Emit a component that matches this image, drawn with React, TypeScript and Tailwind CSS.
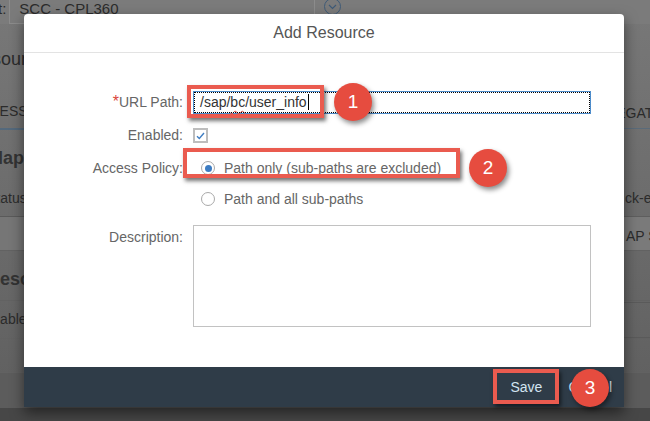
import React from 'react';

const font = { fontFamily: '"Liberation Sans", Arial, sans-serif' };

const Callout = ({ n, className }: { n: string; className: string }) => (
    <div
        className={`absolute w-[38px] h-[38px] rounded-full bg-[#e64c3f] text-white text-[19px] flex items-center justify-center shadow-[2px_3px_5px_rgba(0,0,0,0.45)] ${className}`}
    >
        {n}
    </div>
);

const Frame = ({ className }: { className: string }) => (
    <div className={`absolute border-4 border-[#ea5b4f] shadow-[2px_3px_4px_rgba(0,0,0,0.55)] ${className}`} />
);

export default function App() {
    return (
        <div className="relative w-[650px] h-[421px] overflow-hidden bg-[#6c6c6c] text-[#2b2b2b]" style={font}>
            {/* Page behind the dialog */}
            <div className="flex flex-col w-full h-full bg-gradient-to-b from-[#787878] via-[#6c6c6c] to-[#5e5e5e]">
                <div className="h-[24px] flex items-start gap-[3px] bg-[#7b7b7b]">
                    <span className="text-[15px] leading-[18px] -ml-[2px]">t:</span>
                    <div className="w-[306px] h-[30px] -mt-[6px] border border-[#8c8c8c] pl-[9px] pt-[5px] text-[15px] leading-[18px]">
                        SCC - CPL360
                    </div>
                    <div className="ml-[6px] -mt-[2px] w-[17px] h-[17px] rounded-full border border-[#3f5b78] flex items-center justify-center">
                        <svg width="9" height="6" viewBox="0 0 9 6">
                            <path d="M1 1l3.5 3.5L8 1" fill="none" stroke="#3f5b78" strokeWidth="1.2" />
                        </svg>
                    </div>
                </div>
                <div className="h-[70px] flex items-center">
                    <span className="text-[18px] -ml-[31px]">Resources</span>
                </div>
                <div className="h-[36px] flex items-center border-b-2 border-[#54697c] w-[60px]">
                    <span className="text-[14px] -ml-[30px]">ACCESS</span>
                </div>
                <div className="h-[50px] flex items-end pb-[8px]">
                    <span className="text-[18px] font-bold text-[#333] -ml-[12px]">Mapping</span>
                </div>
                <div className="h-[37px] flex items-center border-b border-[#5a5a5a] w-[34px]">
                    <span className="text-[14px] -ml-[13px]">Status</span>
                </div>
                <div className="h-[33px] bg-[#767676]" />
                <div className="h-[50px] flex items-end pb-[7px] border-t border-[#626262]">
                    <span className="text-[18px] font-bold text-[#333] -ml-[13px]">Resources</span>
                </div>
                <div className="h-[38px] flex items-center border-t border-[#626262]">
                    <span className="text-[14px] -ml-[17px]">Enabled</span>
                </div>
                <div className="h-[34px] border-t border-[#626262]" />
                <div className="h-[36px] border-t border-[#626262] bg-[#5c5c5c]" />
                <div className="flex-1 bg-[#474747]" />
            </div>

            {/* Right strip texts */}
            <div className="absolute top-[103px] left-[589px] text-[14px] whitespace-nowrap">DELEGATE</div>
            <div className="absolute top-[128px] left-[624px] w-[26px] h-[1px] bg-[#5a6b7a]" />
            <div className="absolute top-[188px] left-[625px] text-[14px] whitespace-nowrap">ck-e</div>
            <div className="absolute top-[216px] left-[624px] w-[26px] h-[34px] bg-[#7a7a7a] border-t border-[#5e5e5e] pt-[9px] pl-[2px] text-[14px] whitespace-nowrap overflow-hidden">
                AP S
            </div>
            <div className="absolute top-[302px] left-[624px] w-[26px] h-[1px] bg-[#5a5a5a]" />
            <div className="absolute top-[337px] left-[624px] w-[26px] h-[1px] bg-[#5a5a5a]" />

            {/* Dialog */}
            <div className="absolute left-[24px] top-[14px] w-[600px] h-[393px] bg-white rounded-t-[4px] flex flex-col shadow-[0_6px_14px_rgba(0,0,0,0.5)]">
                <div className="h-[39px] flex items-center justify-center border-b border-[#e3e3e3] text-[16px] text-[#555]">
                    Add Resource
                </div>
                <div className="flex-1 flex flex-col pr-[33px] text-[14px] text-[#666]">
                    <div className="mt-[37px] flex items-center">
                        <div className="w-[159px] text-right">
                            <span className="text-[#d9453a] text-[16px]">*</span>URL Path:
                        </div>
                        <div className="ml-[10px] flex-1 h-[23px] border border-[#4d8ccb] outline-1 outline-dotted outline-black -outline-offset-2 flex items-center pl-[6px] text-[#333]">
                            /sap/<span className="underline decoration-wavy decoration-[#e0463a] decoration-1 underline-offset-[3px]">bc</span>/user_info
                            <span className="w-[1px] h-[16px] bg-black ml-[1px]" />
                        </div>
                    </div>
                    <div className="mt-[14px] flex items-center h-[15px]">
                        <div className="w-[159px] text-right">Enabled:</div>
                        <div className="ml-[10px] w-[15px] h-[15px] border-2 border-[#bdbdbd] flex items-center justify-center">
                            <svg width="9" height="8" viewBox="0 0 9 8">
                                <path d="M1 4.2l2.3 2.3L8 1" fill="none" stroke="#3f7ec3" strokeWidth="1.4" />
                            </svg>
                        </div>
                    </div>
                    <div className="mt-[15px] flex items-center h-[20px]">
                        <div className="w-[159px] text-right">Access Policy:</div>
                        <div className="ml-[18px] w-[14px] h-[14px] rounded-full border border-[#a9a9a9] flex items-center justify-center">
                            <div className="w-[7px] h-[7px] rounded-full bg-[#3d7cc2]" />
                        </div>
                        <span className="ml-[9px]">Path only (sub-paths are excluded)</span>
                    </div>
                    <div className="mt-[11px] flex items-center h-[20px]">
                        <div className="w-[159px]" />
                        <div className="ml-[18px] w-[14px] h-[14px] rounded-full border border-[#a9a9a9]" />
                        <span className="ml-[9px]">Path and all sub-paths</span>
                    </div>
                    <div className="mt-[16px] flex items-start">
                        <div className="w-[159px] text-right pt-[2px]">Description:</div>
                        <div className="ml-[10px] flex-1 h-[102px] border border-[#c2c2c2]" />
                    </div>
                </div>
                <div className="h-[40px] bg-[#2f3c48] flex items-center justify-end pr-[12px] gap-[26px] text-[14px] text-[#d3e4f0]">
                    <span>Save</span>
                    <span>Cancel</span>
                </div>
            </div>

            {/* Annotations */}
            <Frame className="left-[187px] top-[85px] w-[137px] h-[33px]" />
            <Callout n="1" className="left-[334px] top-[83px]" />
            <Frame className="left-[183px] top-[148px] w-[277px] h-[30px]" />
            <Callout n="2" className="left-[469px] top-[149px]" />
            <Frame className="left-[493px] top-[369px] w-[66px] h-[35px]" />
            <Callout n="3" className="left-[571px] top-[369px]" />
        </div>
    );
}
